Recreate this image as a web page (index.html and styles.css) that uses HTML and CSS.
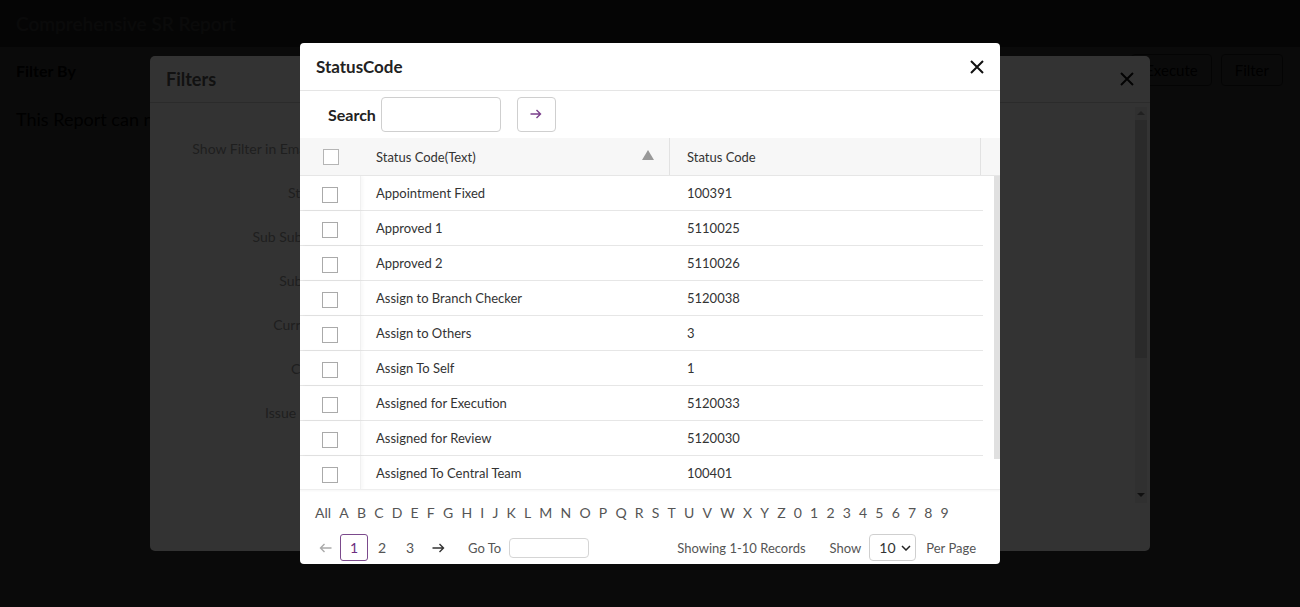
FILE: index.html
```html
<!DOCTYPE html>
<html>
<head>
<meta charset="utf-8">
<link rel="stylesheet" href="styles.css">
</head>
<body>
<div class="page">
  <header class="app-head">Comprehensive SR Report</header>
  <div class="toolbar">
    <span class="filter-by">Filter By</span>
    <div class="tb-buttons"><button class="tb-btn">Execute</button><button class="tb-btn">Filter</button></div>
  </div>
  <p class="note">This Report can not be executed without filters</p>
</div>

<div class="backdrop"></div>

<div class="filters-modal">
  <div class="fm-head"><span>Filters</span>
    <svg class="fm-x" width="14" height="14" viewBox="0 0 14 14"><path d="M1 1L13 13M13 1L1 13" stroke="#111" stroke-width="2"/></svg>
  </div>
  <div class="fm-body">
    <div class="fm-form">
      <div class="fm-row">Show Filter in Email Subject</div>
      <div class="fm-row">Status Code</div>
      <div class="fm-row">Sub Sub Category</div>
      <div class="fm-row">Sub Category</div>
      <div class="fm-row">Current Status</div>
      <div class="fm-row">Created On</div>
      <div class="fm-row">Issue Ruled Out</div>
    </div>
    <div class="fm-scroll"><span class="up"></span><span class="thumb"></span><span class="down"></span></div>
  </div>
</div>

<div class="backdrop"></div>

<div class="sc-modal">
  <div class="sc-head">
    <h2>StatusCode</h2>
    <svg class="sc-x" width="14" height="14" viewBox="0 0 14 14"><path d="M1 1L13 13M13 1L1 13" stroke="#111" stroke-width="2"/></svg>
  </div>
  <div class="sc-search">
    <label>Search</label>
    <input class="search-input" type="text">
    <button class="go-btn"><svg width="12" height="10" viewBox="0 0 12 10"><path d="M0.5 5H10.5M6.5 1L10.5 5L6.5 9" fill="none" stroke="#7b3f8c" stroke-width="1.4"/></svg></button>
  </div>
  <div class="grid">
    <div class="thead">
      <div class="c-check"><span class="cb"></span></div>
      <div class="c-text">Status Code(Text)<span class="sort"></span></div>
      <div class="c-code">Status Code</div>
      <div class="c-gutter"></div>
    </div>
    <div class="tbody-wrap">
      <div class="tbody">
        <div class="row"><div class="c-check"><span class="cb"></span></div><div class="c-text">Appointment Fixed</div><div class="c-code">100391</div></div>
        <div class="row"><div class="c-check"><span class="cb"></span></div><div class="c-text">Approved 1</div><div class="c-code">5110025</div></div>
        <div class="row"><div class="c-check"><span class="cb"></span></div><div class="c-text">Approved 2</div><div class="c-code">5110026</div></div>
        <div class="row"><div class="c-check"><span class="cb"></span></div><div class="c-text">Assign to Branch Checker</div><div class="c-code">5120038</div></div>
        <div class="row"><div class="c-check"><span class="cb"></span></div><div class="c-text">Assign to Others</div><div class="c-code">3</div></div>
        <div class="row"><div class="c-check"><span class="cb"></span></div><div class="c-text">Assign To Self</div><div class="c-code">1</div></div>
        <div class="row"><div class="c-check"><span class="cb"></span></div><div class="c-text">Assigned for Execution</div><div class="c-code">5120033</div></div>
        <div class="row"><div class="c-check"><span class="cb"></span></div><div class="c-text">Assigned for Review</div><div class="c-code">5120030</div></div>
        <div class="row"><div class="c-check"><span class="cb"></span></div><div class="c-text">Assigned To Central Team</div><div class="c-code">100401</div></div>
        <div class="row"><div class="c-check"><span class="cb"></span></div><div class="c-text">Closed</div><div class="c-code">4</div></div>
      </div>
      <div class="vscroll"></div>
    </div>
  </div>
  <div class="sc-foot">
    <div class="alpha">
      <span>All</span><span>A</span><span>B</span><span>C</span><span>D</span><span>E</span><span>F</span><span>G</span><span>H</span><span>I</span><span>J</span><span>K</span><span>L</span><span>M</span><span>N</span><span>O</span><span>P</span><span>Q</span><span>R</span><span>S</span><span>T</span><span>U</span><span>V</span><span>W</span><span>X</span><span>Y</span><span>Z</span><span>0</span><span>1</span><span>2</span><span>3</span><span>4</span><span>5</span><span>6</span><span>7</span><span>8</span><span>9</span>
    </div>
    <div class="pager">
      <div class="pages">
        <svg class="arr prev" width="13" height="10" viewBox="0 0 13 10"><path d="M12.5 5H1.5M5.5 1L1.5 5L5.5 9" fill="none" stroke="#aaa" stroke-width="1.4"/></svg>
        <span class="pg active">1</span>
        <span class="pg">2</span>
        <span class="pg">3</span>
        <svg class="arr next" width="13" height="10" viewBox="0 0 13 10"><path d="M0.5 5H11.5M7.5 1L11.5 5L7.5 9" fill="none" stroke="#333" stroke-width="1.4"/></svg>
        <span class="goto">Go To</span>
        <input class="goto-input" type="text">
      </div>
      <div class="info">
        <span class="showing">Showing 1-10 Records</span>
        <span class="show">Show</span>
        <span class="select">10<svg width="10" height="6" viewBox="0 0 10 6"><path d="M1 1L5 5L9 1" fill="none" stroke="#222" stroke-width="1.5"/></svg></span>
        <span class="perpage">Per Page</span>
      </div>
    </div>
  </div>
</div>
</body>
</html>
```

FILE: styles.css
```css
* { box-sizing: border-box; }
html, body { margin: 0; padding: 0; }
body {
  width: 1300px;
  height: 607px;
  overflow: hidden;
  background: #fff;
  font-family: Lato, "Liberation Sans", sans-serif;
  color: #333;
  position: relative;
}

/* underlying page */
.page { display: flex; flex-direction: column; }
.app-head {
  height: 47px;
  background: #7c7c7c;
  color: #fff;
  font-size: 19px;
  font-weight: 600;
  padding: 0 16px;
  display: flex;
  align-items: center;
}
.toolbar {
  display: flex;
  justify-content: space-between;
  align-items: center;
  padding: 6px 17px 0 16px;
  height: 40px;
}
.filter-by { font-weight: 700; font-size: 16px; color: #000; }
.tb-buttons { display: flex; gap: 9px; }
.tb-btn {
  font: 15px Lato, sans-serif;
  background: #fff;
  border: 1px solid #777;
  border-radius: 4px;
  height: 32px;
  padding: 0 13px;
  color: #000;
}
.note { margin: 21px 16px; font-size: 18px; color: #000; }

.backdrop {
  position: absolute;
  inset: 0;
  background: rgba(0, 0, 0, 0.8);
}

/* filters modal */
.filters-modal {
  position: absolute;
  left: 150px;
  top: 56px;
  width: 1000px;
  height: 495px;
  background: #fff;
  border-radius: 5px;
  display: flex;
  flex-direction: column;
}
.fm-head {
  height: 47px;
  border-bottom: 1px solid #d8d8d8;
  display: flex;
  align-items: center;
  justify-content: space-between;
  padding: 0 16px;
  font-size: 18px;
  font-weight: 700;
  color: #555;
}
.fm-body { flex: 1; display: flex; position: relative; }
.fm-form { flex: 1; padding-top: 37px; }
.fm-row {
  width: 212px;
  text-align: right;
  height: 44px;
  font-size: 14px;
  color: #9a9a9a;
  white-space: nowrap;
}
.fm-scroll {
  width: 12px;
  margin: 4px 3px 48px 0;
  background: #f1f1f1;
  display: flex;
  flex-direction: column;
  align-items: center;
}
.fm-scroll .up { width: 0; height: 0; border-left: 4px solid transparent; border-right: 4px solid transparent; border-bottom: 4px solid #a0a0a0; margin: 4px 0 5px; }
.fm-scroll .thumb { width: 12px; height: 238px; background: #cfcfcf; }
.fm-scroll .down { margin-top: auto; width: 0; height: 0; border-left: 4px solid transparent; border-right: 4px solid transparent; border-top: 4px solid #505050; margin-bottom: 6px; }

/* status code modal */
.sc-modal {
  position: absolute;
  left: 300px;
  top: 43px;
  width: 700px;
  height: 521px;
  background: #fff;
  border-radius: 4px;
  display: flex;
  flex-direction: column;
  overflow: hidden;
}
.sc-head {
  height: 48px;
  flex: none;
  display: flex;
  align-items: center;
  justify-content: space-between;
  padding: 0 16px;
  border-bottom: 1px solid #e5e5e5;
}
.sc-head h2 { margin: 0; font-size: 17px; font-weight: 700; color: #222; }
.sc-search {
  height: 47px;
  flex: none;
  display: flex;
  align-items: center;
  padding: 0 0 1px 28px;
}
.sc-search label { font-weight: 700; font-size: 16px; color: #222; margin-right: 5px; }
.search-input {
  width: 120px;
  height: 35px;
  border: 1px solid #cfcfcf;
  border-radius: 4px;
  outline: none;
}
.go-btn {
  margin-left: 16px;
  width: 39px;
  height: 35px;
  border: 1px solid #cfcfcf;
  border-radius: 4px;
  background: #fff;
  display: flex;
  align-items: center;
  justify-content: center;
  padding: 0;
}

.grid { flex: none; }
.thead {
  height: 38px;
  display: flex;
  background: #f7f7f7;
  border-bottom: 1px solid #e6e6e6;
  font-size: 13px;
  color: #333;
}
.c-check { width: 61px; flex: none; display: flex; align-items: center; justify-content: center; }
.c-text { width: 309px; flex: none; display: flex; align-items: center; padding-left: 15px; position: relative; }
.c-code { width: 311px; flex: none; display: flex; align-items: center; padding-left: 17px; }
.c-gutter { flex: 1; }
.thead .c-text { border-right: 1px solid #e2e2e2; }
.thead .c-code { border-right: 1px solid #e2e2e2; }
.sort {
  position: absolute;
  right: 15px;
  top: 12px;
  width: 0; height: 0;
  border-left: 6px solid transparent;
  border-right: 6px solid transparent;
  border-bottom: 10px solid #999;
}
.cb {
  width: 16px;
  height: 16px;
  border: 1px solid #aaa;
  background: #fff;
  display: block;
}
.thead .cb { border-color: #b5b5b5; }
.row .cb { margin-top: 4px; }

.tbody-wrap {
  height: 314px;
  display: flex;
  overflow: hidden;
  border-bottom: 1px solid #eee;
  box-shadow: 0 1px 2px rgba(0,0,0,0.04);
}
.tbody { width: 683px; flex: none; }
.row {
  height: 35px;
  display: flex;
  border-bottom: 1px solid #e6e6e6;
  font-size: 13px;
  color: #333;
}
.row .c-check { border-right: 1px solid #f0f0f0; box-shadow: 2px 0 3px rgba(0,0,0,0.03); }
.row .c-text { width: 309px; }
.row .c-code { width: 313px; }
.vscroll {
  width: 6px;
  height: 283px;
  margin-left: 11px;
  background: #e0e0e0;
}

.sc-foot { flex: 1; display: flex; flex-direction: column; padding: 13px 0 0 15px; }
.alpha {
  display: flex;
  gap: 8.2px;
  font-size: 14px;
  line-height: 18px;
  color: #555;
  height: 20px;
  align-items: center;
}
.pager {
  display: flex;
  justify-content: space-between;
  align-items: center;
  height: 27px;
  margin-top: 11px;
  padding-right: 24px;
  font-size: 13px;
  color: #555;
}
.pages { display: flex; align-items: center; }
.arr.prev { margin-left: 4px; margin-right: 8px; }
.pg {
  width: 28px;
  height: 27px;
  display: flex;
  align-items: center;
  justify-content: center;
  border: 1px solid transparent;
  border-radius: 3px;
  font-size: 14px;
}
.pg.active { border-color: #7b4a8c; color: #6d2f80; }
.arr.next { margin-left: 8px; }
.goto { margin-left: 23px; color: #555; }
.goto-input {
  margin-left: 8px;
  width: 80px;
  height: 20px;
  border: 1px solid #d5d5d5;
  border-radius: 4px;
}
.info { display: flex; align-items: center; }
.showing { margin-right: 24px; }
.select {
  margin-left: 8px;
  width: 47px;
  height: 27px;
  border: 1px solid #cfcfcf;
  border-radius: 4px;
  display: flex;
  align-items: center;
  justify-content: space-between;
  padding: 0 4px 0 9px;
  color: #333;
  font-size: 14px;
}
.perpage { margin-left: 10px; }
```
